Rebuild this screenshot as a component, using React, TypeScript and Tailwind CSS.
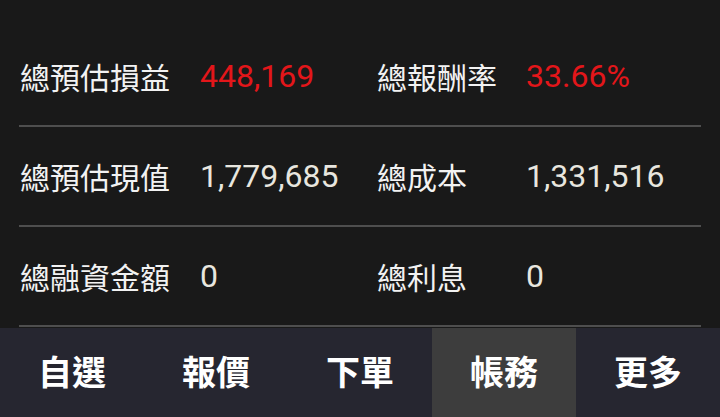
import React from 'react';

const rows = [
  { l: '總預估損益', lv: '448,169', lRed: true, r: '總報酬率', rv: '33.66%', rRed: true },
  { l: '總預估現值', lv: '1,779,685', lRed: false, r: '總成本', rv: '1,331,516', rRed: false },
  { l: '總融資金額', lv: '0', lRed: false, r: '總利息', rv: '0', rRed: false },
];

const tabs = ['自選', '報價', '下單', '帳務', '更多'];

const font = { fontFamily: 'Roboto, "Noto Sans CJK TC", sans-serif' };

export default function App() {
  return (
    <div className="w-[720px] h-[417px] bg-[#191919] flex flex-col overflow-hidden" style={font}>
      <div className="flex-1 pt-[27px] px-[19px]">
        {rows.map((row) => (
          <div key={row.l} className="h-[100px] border-b-2 border-[#4e4e4e] flex items-center">
            <div className="w-[358px] flex items-center">
              <span className="w-[181px] pl-px text-[30px] text-[#f2f2f2] font-['Noto_Sans_CJK_TC',sans-serif]">{row.l}</span>
              <span className={`text-[32px] ${row.lRed ? 'text-[#e3161a]' : 'text-[#e8e6df]'}`}>{row.lv}</span>
            </div>
            <div className="flex items-center">
              <span className="w-[149px] text-[30px] text-[#f2f2f2] font-['Noto_Sans_CJK_TC',sans-serif]">{row.r}</span>
              <span className={`text-[32px] ${row.rRed ? 'text-[#e3161a]' : 'text-[#e8e6df]'}`}>{row.rv}</span>
            </div>
          </div>
        ))}
      </div>
      <nav className="h-[89px] bg-[#262630] grid grid-cols-5">
        {tabs.map((t) => (
          <div
            key={t}
            className={`flex items-center justify-center pb-1 text-[34px] font-bold text-white font-['Noto_Sans_CJK_TC',sans-serif] ${
              t === '帳務' ? 'bg-[#3d3d3d]' : ''
            }`}
          >
            {t}
          </div>
        ))}
      </nav>
    </div>
  );
}
